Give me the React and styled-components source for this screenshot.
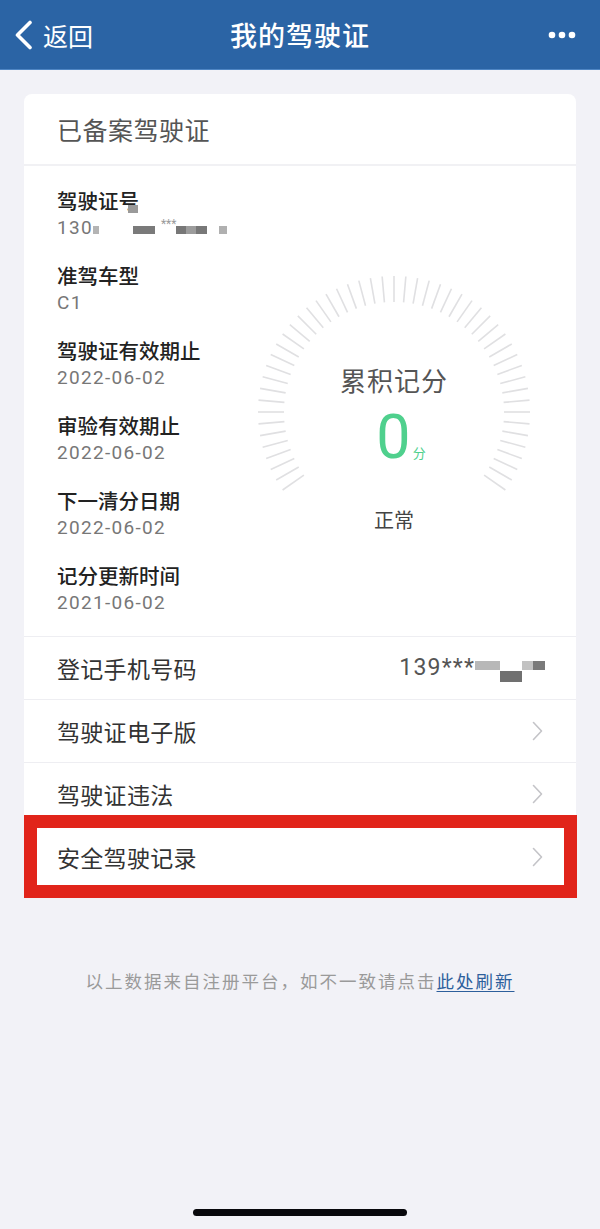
import React from 'react';
import styled, { createGlobalStyle } from 'styled-components';

const GlobalStyle = createGlobalStyle`
  html, body {
    margin: 0;
    padding: 0;
    background: #f2f2f7;
  }
  body {
    font-family: Roboto, "Noto Sans CJK SC", sans-serif;
    -webkit-font-smoothing: antialiased;
  }
`;

const Page = styled.div`
  min-height: 100vh;
  display: flex;
  flex-direction: column;
  background: #f2f2f7;
`;

const NavBar = styled.header`
  height: 70px;
  background: #2b64a5;
  border-bottom: 1px solid #4f86c4;
  box-sizing: border-box;
  display: grid;
  grid-template-columns: 1fr auto 1fr;
  align-items: center;
  color: #fff;
`;

const NavBack = styled.div`
  display: flex;
  align-items: center;
  gap: 9px;
  padding-left: 13px;
  font-size: 25px;
  font-family: "Noto Sans CJK SC", sans-serif;
`;

const NavTitle = styled.h1`
  margin: 0;
  font-size: 27px;
  font-weight: 500;
  font-family: "Noto Sans CJK SC", sans-serif;
  letter-spacing: 1px;
`;

const NavMore = styled.div`
  display: flex;
  justify-content: flex-end;
  padding-right: 24px;
`;

const Card = styled.section`
  margin: 24px 24px 0;
  background: #fff;
  border-radius: 8px;
`;

const CardHeader = styled.div`
  height: 70px;
  display: flex;
  align-items: center;
  padding-left: 33px;
  border-bottom: 2px solid #f1f1f4;
  font-size: 25px;
  color: #555;
  font-family: "Noto Sans CJK SC", sans-serif;
  letter-spacing: 0.5px;
`;

const Summary = styled.div`
  display: flex;
  padding: 20px 0 19px;
`;

const InfoList = styled.div`
  flex: 1;
  padding-left: 33px;
  display: flex;
  flex-direction: column;
  gap: 19px;
`;

const InfoItem = styled.div`
  display: flex;
  flex-direction: column;
`;

const InfoLabel = styled.div`
  position: relative;
  align-self: flex-start;
  height: 28px;
  font-size: 20.5px;
  line-height: 28px;
  color: #222;
  font-family: "Noto Sans CJK SC", sans-serif;
  font-weight: 500;
`;

const InfoValue = styled.div`
  height: 28px;
  font-size: 19px;
  line-height: 28px;
  color: #777;
  letter-spacing: 1.3px;
  white-space: nowrap;
`;

const Mask = styled.span`
  display: inline-block;
  width: ${p => p.$w}px;
  height: ${p => p.$h}px;
  margin-left: ${p => p.$ml || 0}px;
  background: ${p => p.$shade};
  vertical-align: ${p => p.$dy || 0}px;
`;

const LabelMask = styled(Mask)`
  position: absolute;
  left: ${p => p.$x}px;
  top: ${p => p.$y}px;
`;

const Stars = styled.span`
  font-size: 12px;
  line-height: 12px;
  color: #9a9a9a;
  margin-left: ${p => p.$ml || 0}px;
  vertical-align: ${p => p.$dy || 0}px;
  letter-spacing: 0;
`;

const Gauge = styled.div`
  position: relative;
  width: 290px;
  height: 290px;
  margin: 81px 37px 0 0;
  display: flex;
  flex-direction: column;
  align-items: center;
  font-family: "Noto Sans CJK SC", sans-serif;
`;

const Dial = styled.svg`
  position: absolute;
  left: 0;
  top: 0;
`;

const GaugeCaption = styled.div`
  margin-top: 97px;
  font-size: 26px;
  line-height: 32px;
  color: #555;
  letter-spacing: 1px;
`;

const ScoreLine = styled.div`
  margin-top: 11px;
  height: 60px;
  display: flex;
  align-items: baseline;
  color: #4fd08d;
  line-height: 60px;
  padding-left: 14px;
`;

const Score = styled.span`
  font-family: Roboto, sans-serif;
  font-weight: 400;
  font-size: 61px;
`;

const ScoreUnit = styled.span`
  font-size: 13px;
  margin-left: 2px;
`;

const Status = styled.div`
  margin-top: 39px;
  font-size: 20px;
  line-height: 28px;
  color: #444;
`;

const ListRow = styled.div`
  position: relative;
  height: 62px;
  border-top: 1px solid #eeeef2;
  display: flex;
  align-items: center;
  justify-content: space-between;
  padding: 0 ${p => (p.$value ? 31 : 33)}px 0 33px;
`;

const RowLabel = styled.span`
  font-size: 23px;
  color: #333;
  font-family: "Noto Sans CJK SC", sans-serif;
  letter-spacing: 0.3px;
`;

const RowValue = styled.span`
  font-size: 23px;
  color: #555;
  letter-spacing: 1.2px;
  white-space: nowrap;
`;

const Highlight = styled.div`
  position: absolute;
  left: 0;
  right: -1px;
  top: -11px;
  bottom: -10px;
  border: 13px solid #e1241a;
  pointer-events: none;
`;

const Note = styled.p`
  margin: 80px 0 0;
  text-align: center;
  font-size: 17.5px;
  line-height: 26px;
  letter-spacing: 2px;
  color: #9a9a9a;
  font-family: "Noto Sans CJK SC", sans-serif;
`;

const NoteLink = styled.a`
  color: #2d5f9c;
  text-decoration: underline;
  text-underline-offset: 3px;
`;

const HomeBar = styled.div`
  margin: auto auto 13px;
  width: 214px;
  height: 7px;
  border-radius: 4px;
  background: #08080c;
`;

function Chevron() {
  return (
    <svg width="11" height="20" viewBox="0 0 11 20">
      <path d="M1.5 1.5 L9.5 10 L1.5 18.5" fill="none" stroke="#c4c4c8" strokeWidth="1.6" strokeLinecap="round" strokeLinejoin="round" />
    </svg>
  );
}

function Ticks() {
  const ticks = [];
  for (let a = -125; a <= 125; a += 5) {
    const r = (a * Math.PI) / 180;
    const s = Math.sin(r);
    const c = -Math.cos(r);
    ticks.push(
      <line
        key={a}
        x1={145 + s * 110}
        y1={145 + c * 110}
        x2={145 + s * 136}
        y2={145 + c * 136}
        stroke="#e0e0e2"
        strokeWidth="1.6"
      />
    );
  }
  return (
    <Dial width="290" height="290" viewBox="0 0 290 290">
      {ticks}
    </Dial>
  );
}

const info = [
  { label: '准驾车型', value: 'C1' },
  { label: '驾驶证有效期止', value: '2022-06-02' },
  { label: '审验有效期止', value: '2022-06-02' },
  { label: '下一清分日期', value: '2022-06-02' },
  { label: '记分更新时间', value: '2021-06-02' },
];

const links = ['驾驶证电子版', '驾驶证违法'];

export default function App() {
  return (
    <Page>
      <GlobalStyle />
      <NavBar>
        <NavBack>
          <svg width="21" height="30" viewBox="0 0 21 30">
            <path d="M17 2.5 L4.5 15 L17 27.5" fill="none" stroke="#fff" strokeWidth="3.6" strokeLinecap="round" strokeLinejoin="round" />
          </svg>
          返回
        </NavBack>
        <NavTitle>我的驾驶证</NavTitle>
        <NavMore>
          <svg width="28" height="8" viewBox="0 0 28 8">
            <circle cx="4" cy="4" r="3.3" fill="#fff" />
            <circle cx="14" cy="4" r="3.3" fill="#fff" />
            <circle cx="24" cy="4" r="3.3" fill="#fff" />
          </svg>
        </NavMore>
      </NavBar>

      <Card>
        <CardHeader>已备案驾驶证</CardHeader>
        <Summary>
          <InfoList>
            <InfoItem>
              <InfoLabel>
                驾驶证号
                <LabelMask $w={10} $h={8} $shade="#9a9a9a" $x={71} $y={19} />
              </InfoLabel>
              <InfoValue>
                130
                <Mask $w={6} $h={8} $shade="#b4b4b4" />
                <Mask $w={22} $h={8} $shade="#7a7a7a" $ml={34} />
                <Stars $ml={6} $dy={6}>***</Stars>
                <Mask $w={10} $h={8} $shade="#777" />
                <Mask $w={10} $h={8} $shade="#9c9c9c" />
                <Mask $w={11} $h={8} $shade="#787878" />
                <Mask $w={8} $h={8} $shade="#b0b0b0" $ml={12} />
              </InfoValue>
            </InfoItem>
            {info.map((it, i) => (
              <InfoItem key={i}>
                <InfoLabel>{it.label}</InfoLabel>
                <InfoValue>{it.value}</InfoValue>
              </InfoItem>
            ))}
          </InfoList>
          <Gauge>
            <Ticks />
            <GaugeCaption>累积记分</GaugeCaption>
            <ScoreLine>
              <Score>0</Score>
              <ScoreUnit>分</ScoreUnit>
            </ScoreLine>
            <Status>正常</Status>
          </Gauge>
        </Summary>

        <ListRow $value>
          <RowLabel>登记手机号码</RowLabel>
          <RowValue>
            139***
            <Mask $w={25} $h={9} $shade="#b8b8b8" $dy={5} />
            <Mask $w={22} $h={11} $shade="#707070" $dy={-7} />
            <Mask $w={11} $h={9} $shade="#c2c2c2" $dy={5} />
            <Mask $w={12} $h={9} $shade="#7a7a7a" $dy={5} />
          </RowValue>
        </ListRow>
        {links.map((l, i) => (
          <ListRow key={i}>
            <RowLabel>{l}</RowLabel>
            <Chevron />
          </ListRow>
        ))}
        <ListRow>
          <RowLabel>安全驾驶记录</RowLabel>
          <Chevron />
          <Highlight />
        </ListRow>
      </Card>

      <Note>
        以上数据来自注册平台，如不一致请点击<NoteLink>此处刷新</NoteLink>
      </Note>

      <HomeBar />
    </Page>
  );
}
